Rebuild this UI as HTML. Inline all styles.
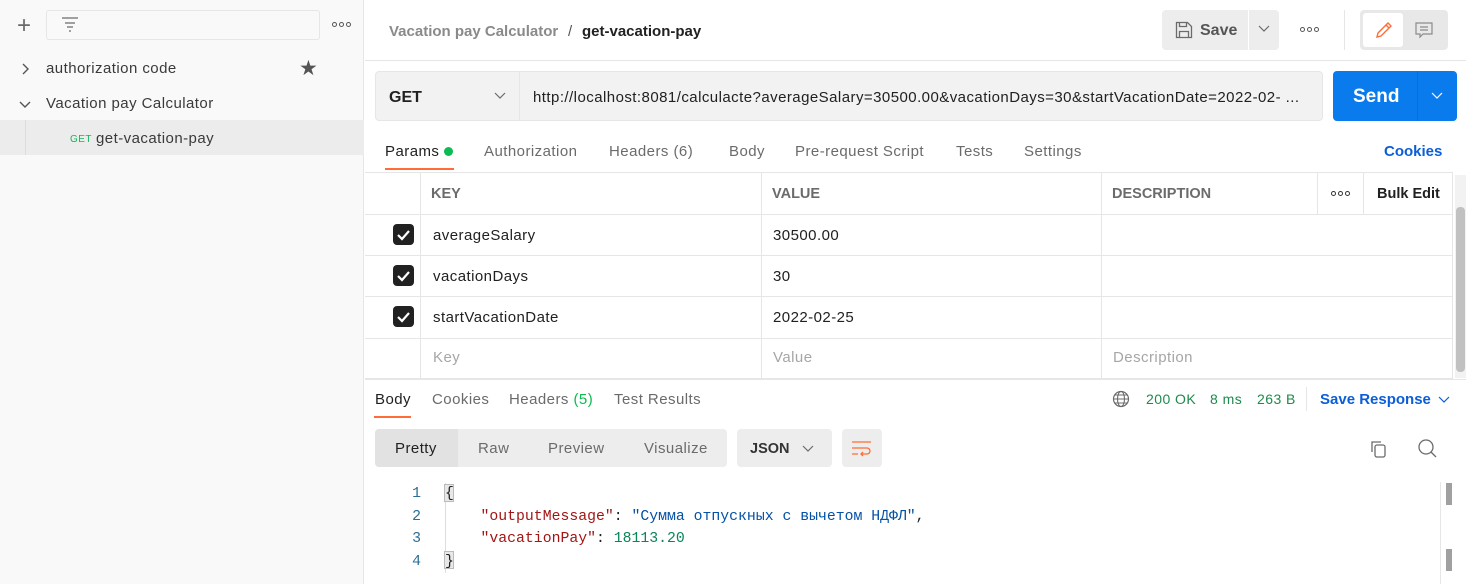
<!DOCTYPE html><html><head><meta charset="utf-8"><style>
*{box-sizing:border-box;margin:0;padding:0}
body{width:1466px;height:584px;overflow:hidden;background:#fff;font-family:"Liberation Sans",sans-serif;font-size:15px;color:#212121;position:relative;letter-spacing:0.45px}
.a{position:absolute;white-space:nowrap}
.b{font-weight:bold;letter-spacing:0}
.hl{position:absolute;height:1px;background:#e6e6e6}
.vl{position:absolute;width:1px;background:#e6e6e6}
.cb{position:absolute;left:393px;width:21px;height:21px;background:#212121;border-radius:4px}
.mono{font-family:"Liberation Mono","DejaVu Sans Mono",monospace;font-size:14.8px;letter-spacing:0}
.dots{position:absolute;display:flex;gap:2px}
.dots i{display:block;width:5px;height:5px;border:1px solid #555;border-radius:50%}
</style></head><body>
<!-- sidebar -->
<div class="a" style="left:0;top:0;width:364px;height:584px;background:#f9f9f9;border-right:1px solid #e6e6e6"></div>
<div class="a" style="left:17px;top:14px;font-size:24px;color:#6b6b6b;line-height:24px;font-weight:300">+</div>
<div class="a" style="left:46px;top:10px;width:274px;height:30px;border:1px solid #e6e6e6;border-radius:3px;background:#f9f9f9"></div>
<svg class="a" style="left:61px;top:17px" width="18" height="16"><path d="M1 1h16M4 6h10M6 10h6M8 14h2" stroke="#6b6b6b" stroke-width="1.3"/></svg>
<div class="dots" style="left:332px;top:22px"><i></i><i></i><i></i></div>
<svg class="a" style="left:21px;top:63px" width="10" height="12"><path d="M2 1l5 5-5 5" fill="none" stroke="#555" stroke-width="1.4"/></svg>
<div class="a" style="left:46px;top:60px;color:#3a3a3a">authorization code</div>
<div class="a" style="left:299px;top:56px;font-size:21px;color:#555">★</div>
<svg class="a" style="left:19px;top:100px" width="12" height="10"><path d="M1 2l5 5 5-5" fill="none" stroke="#555" stroke-width="1.4"/></svg>
<div class="a" style="left:46px;top:95px;color:#3a3a3a">Vacation pay Calculator</div>
<div class="a" style="left:0;top:120px;width:364px;height:35px;background:#ececec"></div>
<div class="vl" style="left:25px;top:120px;height:35px;background:#ddd"></div>
<div class="a" style="left:70px;top:134px;font-size:10px;color:#0cbb52">GET</div>
<div class="a" style="left:96px;top:130px;color:#3a3a3a">get-vacation-pay</div>
<!-- header -->
<div class="a b" style="left:389px;top:23px;color:#8a8a8a">Vacation pay Calculator</div>
<div class="a" style="left:568px;top:23px;color:#555">/</div>
<div class="a b" style="left:582px;top:23px;color:#212121">get-vacation-pay</div>
<div class="a" style="left:1162px;top:10px;width:86px;height:40px;background:#ededed;border-radius:4px 0 0 4px"></div>
<svg class="a" style="left:1175px;top:21px" width="18" height="18"><path d="M1.5 1.5h11l4 4v11h-15z M4.5 1.5v4h7v-4 M4.5 16.5v-6h9v6" fill="none" stroke="#6b6b6b" stroke-width="1.3"/></svg>
<div class="a b" style="left:1200px;top:22px;color:#555;font-size:16px">Save</div>
<div class="a" style="left:1249px;top:10px;width:30px;height:40px;background:#ededed;border-radius:0 4px 4px 0"></div>
<svg class="a" style="left:1258px;top:25px" width="12" height="8"><path d="M1 1l5 5 5-5" fill="none" stroke="#6b6b6b" stroke-width="1.2"/></svg>
<div class="dots" style="left:1300px;top:27px"><i></i><i></i><i></i></div>
<div class="vl" style="left:1344px;top:10px;height:40px"></div>
<div class="a" style="left:1360px;top:10px;width:88px;height:40px;background:#e8e8e8;border-radius:4px"></div>
<div class="a" style="left:1363px;top:13px;width:40px;height:34px;background:#fff;border-radius:3px"></div>
<svg class="a" style="left:1374px;top:20px" width="20" height="20"><path d="M3 17l1-4 10-10 3 3-10 10z M12 5l3 3" fill="none" stroke="#ff6c37" stroke-width="1.4"/></svg>
<svg class="a" style="left:1414px;top:21px" width="20" height="18"><path d="M2 2h16v11h-9l-3 3v-3h-4z M6 6h8M6 9h8" fill="none" stroke="#8a8a8a" stroke-width="1.2"/></svg>
<div class="hl" style="left:365px;top:60px;width:1101px"></div>
<!-- url -->
<div class="a" style="left:375px;top:71px;width:948px;height:50px;background:#f2f2f2;border:1px solid #e6e6e6;border-radius:4px"></div>
<div class="vl" style="left:519px;top:72px;height:48px"></div>
<div class="a b" style="left:389px;top:89px;font-size:16px">GET</div>
<svg class="a" style="left:494px;top:92px" width="12" height="8"><path d="M1 1l5 5 5-5" fill="none" stroke="#6b6b6b" stroke-width="1.2"/></svg>
<div class="a" style="left:533px;top:89px;color:#212121">http://localhost:8081/calculacte?averageSalary=30500.00&amp;vacationDays=30&amp;startVacationDate=2022-02- ...</div>
<div class="a" style="left:1333px;top:71px;width:124px;height:50px;background:#097bed;border-radius:4px"></div>
<div class="vl" style="left:1417px;top:71px;height:50px;background:#0a6fd4"></div>
<div class="a b" style="left:1353px;top:86px;color:#fff;font-size:19px">Send</div>
<svg class="a" style="left:1431px;top:92px" width="12" height="8"><path d="M1 1l5 5 5-5" fill="none" stroke="#fff" stroke-width="1.2"/></svg>
<!-- tabs -->
<div class="a" style="left:385px;top:143px;color:#212121">Params</div>
<div class="a" style="left:444px;top:147px;width:9px;height:9px;border-radius:50%;background:#0cbb52"></div>
<div class="a" style="left:385px;top:168px;width:69px;height:2px;background:#ff6c37"></div>
<div class="a" style="left:484px;top:143px;color:#6b6b6b">Authorization</div>
<div class="a" style="left:609px;top:143px;color:#6b6b6b">Headers (6)</div>
<div class="a" style="left:729px;top:143px;color:#6b6b6b">Body</div>
<div class="a" style="left:795px;top:143px;color:#6b6b6b">Pre-request Script</div>
<div class="a" style="left:956px;top:143px;color:#6b6b6b">Tests</div>
<div class="a" style="left:1024px;top:143px;color:#6b6b6b">Settings</div>
<div class="a b" style="left:1384px;top:143px;color:#0b5ed7">Cookies</div>
<!-- table -->
<div class="hl" style="left:365px;top:172px;width:1088px"></div>
<div class="hl" style="left:365px;top:214px;width:1088px"></div>
<div class="hl" style="left:365px;top:255px;width:1088px"></div>
<div class="hl" style="left:365px;top:296px;width:1088px"></div>
<div class="hl" style="left:365px;top:338px;width:1088px"></div>
<div class="hl" style="left:365px;top:378px;width:1088px"></div>
<div class="vl" style="left:420px;top:172px;height:206px"></div>
<div class="vl" style="left:761px;top:172px;height:206px"></div>
<div class="vl" style="left:1101px;top:172px;height:206px"></div>
<div class="vl" style="left:1317px;top:172px;height:42px"></div>
<div class="vl" style="left:1363px;top:172px;height:42px"></div>
<div class="vl" style="left:1452px;top:172px;height:206px"></div>
<div class="a b" style="left:431px;top:186px;color:#6b6b6b;font-size:14.5px">KEY</div>
<div class="a b" style="left:772px;top:186px;color:#6b6b6b;font-size:14.5px">VALUE</div>
<div class="a b" style="left:1112px;top:186px;color:#6b6b6b;font-size:14.5px">DESCRIPTION</div>
<div class="dots" style="left:1331px;top:191px"><i style="border-color:#333"></i><i style="border-color:#333"></i><i style="border-color:#333"></i></div>
<div class="a b" style="left:1377px;top:186px;color:#212121;font-size:14.5px">Bulk Edit</div>
<div class="cb" style="top:224px"></div><div class="cb" style="top:265px"></div><div class="cb" style="top:306px"></div>
<svg class="a" style="left:393px;top:224px" width="21" height="21"><path d="M5 11l4 4 7-8" fill="none" stroke="#fff" stroke-width="2.2"/></svg>
<svg class="a" style="left:393px;top:265px" width="21" height="21"><path d="M5 11l4 4 7-8" fill="none" stroke="#fff" stroke-width="2.2"/></svg>
<svg class="a" style="left:393px;top:306px" width="21" height="21"><path d="M5 11l4 4 7-8" fill="none" stroke="#fff" stroke-width="2.2"/></svg>
<div class="a" style="left:433px;top:227px">averageSalary</div>
<div class="a" style="left:773px;top:227px">30500.00</div>
<div class="a" style="left:433px;top:268px">vacationDays</div>
<div class="a" style="left:773px;top:268px">30</div>
<div class="a" style="left:433px;top:309px">startVacationDate</div>
<div class="a" style="left:773px;top:309px">2022-02-25</div>
<div class="a" style="left:433px;top:349px;color:#a6a6a6">Key</div>
<div class="a" style="left:773px;top:349px;color:#a6a6a6">Value</div>
<div class="a" style="left:1113px;top:349px;color:#a6a6a6">Description</div>
<div class="a" style="left:1455px;top:175px;width:11px;height:203px;background:#f2f2f2"></div>
<div class="a" style="left:1456px;top:207px;width:9px;height:165px;background:#c1c1c1;border-radius:4px"></div>
<!-- response -->
<div class="hl" style="left:365px;top:379px;width:1101px"></div>
<div class="a" style="left:375px;top:391px;color:#212121">Body</div>
<div class="a" style="left:374px;top:416px;width:37px;height:2px;background:#ff6c37"></div>
<div class="a" style="left:432px;top:391px;color:#6b6b6b">Cookies</div>
<div class="a" style="left:509px;top:391px;color:#6b6b6b">Headers <span style="color:#0cbb52">(5)</span></div>
<div class="a" style="left:614px;top:391px;color:#6b6b6b">Test Results</div>
<svg class="a" style="left:1112px;top:390px" width="18" height="18"><circle cx="9" cy="9" r="7.5" fill="none" stroke="#6b6b6b" stroke-width="1.2"/><ellipse cx="9" cy="9" rx="3.5" ry="7.5" fill="none" stroke="#6b6b6b" stroke-width="1.1"/><path d="M1.5 9h15M3 5h12M3 13h12" stroke="#6b6b6b" stroke-width="1"/></svg>
<div class="a" style="left:1146px;top:391px;color:#1e8a4c;font-size:14px">200 OK</div>
<div class="a" style="left:1210px;top:391px;color:#1e8a4c;font-size:14px">8 ms</div>
<div class="a" style="left:1257px;top:391px;color:#1e8a4c;font-size:14px">263 B</div>
<div class="vl" style="left:1306px;top:387px;height:24px"></div>
<div class="a b" style="left:1320px;top:391px;color:#0b5ed7">Save Response</div>
<svg class="a" style="left:1438px;top:396px" width="12" height="8"><path d="M1 1l5 5 5-5" fill="none" stroke="#0b5ed7" stroke-width="1.2"/></svg>
<div class="a" style="left:375px;top:429px;width:352px;height:38px;background:#ededed;border-radius:4px"></div>
<div class="a" style="left:375px;top:429px;width:83px;height:38px;background:#e2e2e2;border-radius:4px 0 0 4px"></div>
<div class="a" style="left:395px;top:440px;color:#212121">Pretty</div>
<div class="a" style="left:478px;top:440px;color:#6b6b6b">Raw</div>
<div class="a" style="left:548px;top:440px;color:#6b6b6b">Preview</div>
<div class="a" style="left:644px;top:440px;color:#6b6b6b">Visualize</div>
<div class="a" style="left:737px;top:429px;width:95px;height:38px;background:#ededed;border-radius:4px"></div>
<div class="a b" style="left:750px;top:441px;font-size:14.5px;color:#333">JSON</div>
<svg class="a" style="left:802px;top:445px" width="12" height="8"><path d="M1 1l5 5 5-5" fill="none" stroke="#6b6b6b" stroke-width="1.2"/></svg>
<div class="a" style="left:842px;top:429px;width:40px;height:38px;background:#ededed;border-radius:4px"></div>
<svg class="a" style="left:851px;top:440px" width="22" height="18"><path d="M1 2h19M1 8h15a3 3 0 0 1 0 6h-6M12 12l-2 2 2 2M1 14h6" fill="none" stroke="#ff6c37" stroke-width="1.3"/></svg>
<svg class="a" style="left:1368px;top:439px" width="20" height="20"><path d="M4 13V3h9" fill="none" stroke="#6b6b6b" stroke-width="1.3"/><rect x="7" y="6" width="10" height="12" rx="2" fill="none" stroke="#6b6b6b" stroke-width="1.3"/></svg>
<svg class="a" style="left:1417px;top:438px" width="22" height="22"><circle cx="9" cy="9" r="7" fill="none" stroke="#6b6b6b" stroke-width="1.3"/><path d="M14 14l5 5" stroke="#6b6b6b" stroke-width="1.3"/></svg>
<!-- code -->
<div class="a mono" style="left:410px;top:483px;color:#2a6f97;line-height:22.5px;text-align:right;width:11px">1<br>2<br>3<br>4</div>
<div class="vl" style="left:445px;top:483px;height:90px;background:#ddd"></div>
<div class="a" style="left:444px;top:484px;width:10px;height:18px;background:#e8e8e8;border:1px solid #bbb"></div>
<div class="a" style="left:444px;top:551px;width:10px;height:18px;background:#e8e8e8;border:1px solid #bbb"></div>
<div class="a mono" style="left:445px;top:483px;line-height:22.5px;color:#212121">{<br>&nbsp;&nbsp;&nbsp;&nbsp;<span style="color:#a31515">"outputMessage"</span>: <span style="color:#0451a5">"Сумма отпускных с вычетом НДФЛ"</span>,<br>&nbsp;&nbsp;&nbsp;&nbsp;<span style="color:#a31515">"vacationPay"</span>: <span style="color:#098658">18113.20</span><br>}</div>
<div class="vl" style="left:1440px;top:482px;height:102px"></div>
<div class="a" style="left:1446px;top:483px;width:6px;height:22px;background:#a0a0a0"></div>
<div class="a" style="left:1446px;top:549px;width:6px;height:22px;background:#a0a0a0"></div>
</body></html>
